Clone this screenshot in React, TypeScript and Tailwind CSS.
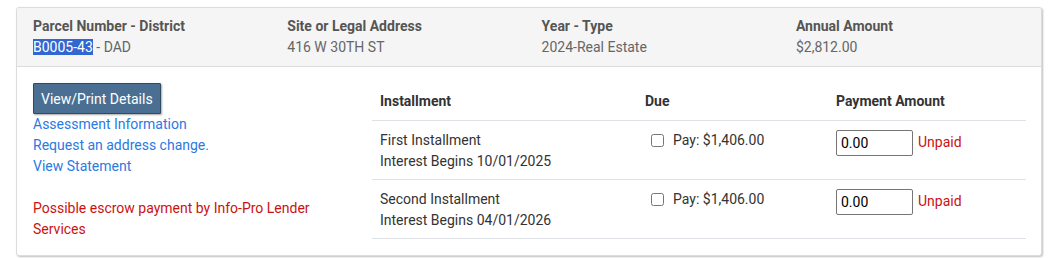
const header = [
  { label: 'Parcel Number - District', value: null },
  { label: 'Site or Legal Address', value: '416 W 30TH ST' },
  { label: 'Year - Type', value: '2024-Real Estate' },
  { label: 'Annual Amount', value: '$2,812.00' },
];

const installments = [
  { name: 'First Installment', interest: 'Interest Begins 10/01/2025', due: '$1,406.00' },
  { name: 'Second Installment', interest: 'Interest Begins 04/01/2026', due: '$1,406.00' },
];

export default function App() {
  return (
    <div className="min-h-[258px] bg-white pt-[7px] pl-[16px] pr-[7px] font-['Roboto',sans-serif] text-[14px]">
      <div className="rounded-[3px] border border-[#dcdcdc] bg-white shadow-[1px_1px_2px_rgba(0,0,0,0.25)]">
        <div className="flex h-[59px] overflow-hidden rounded-t-[3px] border-b border-[#dcdcdc] bg-[#f5f5f5] pl-[16px] pt-[8px] leading-[21px]">
          {header.map((h) => (
            <div key={h.label} className="w-[254.3px] shrink-0">
              <div className="font-bold text-[#555]">{h.label}</div>
              <div className="text-[#666]">
                {h.value ?? (
                  <>
                    <span className="bg-[#3266d0] text-white">B0005-43</span> - DAD
                  </>
                )}
              </div>
            </div>
          ))}
        </div>

        <div className="flex pl-[16px] pr-[15px] pt-[16px] pb-[15px]">
          <div className="w-[339px] leading-[21px]">
            <button className="h-[31px] rounded-[1px] border border-[#2f4a63] bg-[#4a6f93] px-[7px] text-[14px] leading-[20px] text-white shadow-[1px_1px_2px_rgba(0,0,0,0.35)]">
              View/Print Details
            </button>
            <div className="text-[#2a7ae2]">
              <div>Assessment Information</div>
              <div>Request an address change.</div>
              <div>View Statement</div>
            </div>
            <div className="mt-[21px] pr-[60px] text-[#cc1111]">
              Possible escrow payment by Info-Pro Lender Services
            </div>
          </div>

          <div className="flex-1 pt-[8px] text-[#333]">
            <div className="flex h-[30px] border-b border-[#dee2e6] font-bold leading-[21px]">
              <div className="w-[265px] pl-[8px]">Installment</div>
              <div className="w-[191px] pl-[8px]">Due</div>
              <div className="pl-[8px]">Payment Amount</div>
            </div>
            {installments.map((i) => (
              <div key={i.name} className="flex h-[59px] border-b border-[#dee2e6] pt-[9px] leading-[21px]">
                <div className="w-[265px] pl-[8px]">
                  <div>{i.name}</div>
                  <div>{i.interest}</div>
                </div>
                <div className="flex w-[191px] items-start pl-[14px]">
                  <input type="checkbox" className="mt-[4px] h-[13px] w-[13px]" />
                  <span className="ml-[9px]">Pay: {i.due}</span>
                </div>
                <div className="flex items-start pl-[8px]">
                  <input
                    readOnly
                    value="0.00"
                    className="h-[26px] w-[77px] rounded-[2px] border border-[#767676] px-[4px] text-[14px] text-black"
                  />
                  <span className="ml-[5px] mt-[2px] text-[#cc1111]">Unpaid</span>
                </div>
              </div>
            ))}
          </div>
        </div>
      </div>
    </div>
  );
}
